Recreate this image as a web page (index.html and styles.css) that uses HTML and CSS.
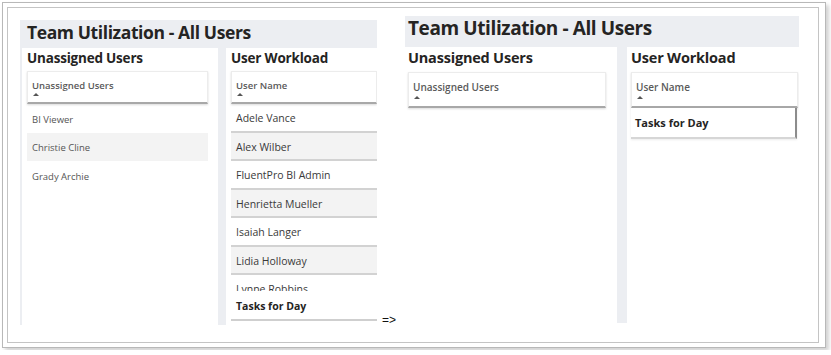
FILE: index.html
```html
<!DOCTYPE html>
<html lang="en">
<head>
  <meta charset="UTF-8">
  <title>Team Utilization - Before and After</title>
  <link rel="stylesheet" href="styles.css">
</head>
<body>
  <div class="frame">
    <div class="sheet">

      <!-- before -->
      <div class="shot shot-before">
        <div class="shot-title">Team Utilization - All Users</div>
        <div class="shot-body">
          <div class="panel panel-left">
            <div class="panel-title">Unassigned Users</div>
            <div class="table-head">
              <span>Unassigned Users</span>
              <i class="caret"></i>
            </div>
            <div class="row">BI Viewer</div>
            <div class="row row-alt">Christie Cline</div>
            <div class="row">Grady Archie</div>
          </div>
          <div class="panel panel-right">
            <div class="panel-title">User Workload</div>
            <div class="table-head">
              <span>User Name</span>
              <i class="caret"></i>
            </div>
            <div class="rows">
              <div class="row row-line">Adele Vance</div>
              <div class="row row-line row-alt">Alex Wilber</div>
              <div class="row row-line">FluentPro BI Admin</div>
              <div class="row row-line row-alt">Henrietta Mueller</div>
              <div class="row row-line">Isaiah Langer</div>
              <div class="row row-line row-alt">Lidia Holloway</div>
              <div class="row row-line">Lynne Robbins</div>
            </div>
            <div class="tasks">Tasks for Day</div>
          </div>
        </div>
      </div>

      <div class="arrow">=&gt;</div>

      <!-- after -->
      <div class="shot shot-after">
        <div class="shot-title">Team Utilization - All Users</div>
        <div class="shot-body">
          <div class="panel panel-left">
            <div class="panel-title">Unassigned Users</div>
            <div class="table-head">
              <span>Unassigned Users</span>
              <i class="caret"></i>
            </div>
          </div>
          <div class="panel panel-right">
            <div class="panel-title">User Workload</div>
            <div class="table-head">
              <span>User Name</span>
              <i class="caret"></i>
            </div>
            <div class="tasks">Tasks for Day</div>
          </div>
        </div>
      </div>

    </div>
  </div>
</body>
</html>
```

FILE: styles.css
```css
* {
  box-sizing: border-box;
}

body {
  margin: 0;
  background: #ffffff;
  font-family: "Open Sans", "Noto Sans", sans-serif;
  color: #252423;
}

.frame {
  width: 824px;
  height: 346px;
  margin: 2px;
  border: 1px solid #b8b8b8;
  background: #fff;
  box-shadow: 3px 3px 4px rgba(0, 0, 0, 0.18);
}

.sheet {
  width: 812px;
  height: 336px;
  margin: 4px;
  border: 1px solid #c4c4c4;
  padding: 8px 0 0 12px;
  display: flex;
  align-items: flex-start;
}

.shot {
  display: flex;
  flex-direction: column;
  background: #eceef2;
}

.shot-title {
  font-weight: 700;
  letter-spacing: -0.4px;
  white-space: nowrap;
}

.shot-body {
  flex: 1;
  display: flex;
}

.panel {
  background: #fff;
  overflow: hidden;
  display: flex;
  flex-direction: column;
}

.panel-title {
  font-weight: 700;
  letter-spacing: -0.2px;
  white-space: nowrap;
}

.table-head {
  background: #fff;
  border: 1px solid #ececec;
  border-bottom: 2px solid #a8a8a8;
  box-shadow: 0 1px 2px rgba(0, 0, 0, 0.15);
  color: #5a5a5a;
  font-weight: 600;
  white-space: nowrap;
  display: flex;
  flex-direction: column;
  align-items: flex-start;
}

.caret {
  width: 0;
  height: 0;
  border-left: 3px solid transparent;
  border-right: 3px solid transparent;
  border-bottom: 3px solid #555;
}

.row {
  height: 28.5px;
  padding-top: 2px;
  display: flex;
  align-items: center;
  white-space: nowrap;
}

.row-alt {
  background: #f3f3f3;
}

.row-line {
  border-bottom: 2px solid #d2d2d2;
}

.tasks {
  font-weight: 700;
  white-space: nowrap;
  display: flex;
  align-items: center;
  background: #fff;
}

.arrow {
  width: 23px;
  margin: 296px 0 0 5px;
  font-family: "Liberation Sans", sans-serif;
  font-size: 12px;
  line-height: 16px;
  color: #111;
}

/* before */

.shot-before {
  width: 357px;
  height: 305px;
  margin-top: 4px;
}

.shot-before .shot-title {
  height: 28px;
  padding-left: 7px;
  font-size: 17.5px;
  line-height: 24px;
}

.shot-before .shot-body {
  padding-left: 2px;
  gap: 8px;
}

.shot-before .panel-left {
  width: 196px;
  padding: 0 10px 0 5px;
}

.shot-before .panel-right {
  flex: 1;
  padding-left: 5px;
}

.shot-before .panel-title {
  font-size: 13.5px;
  line-height: 20px;
  margin-bottom: 3px;
}

.shot-before .table-head {
  height: 33px;
  padding: 7px 0 0 4px;
  font-size: 9.5px;
  line-height: 13px;
}

.shot-before .caret {
  margin: 1px 0 0 1px;
}

.shot-before .panel-left .row {
  padding-left: 5px;
  font-size: 9.5px;
  color: #555;
}

.shot-before .rows {
  height: 187px;
  overflow: hidden;
}

.shot-before .panel-right .row {
  padding-left: 5px;
  font-size: 10.5px;
  color: #3a3a3a;
}

.shot-before .tasks {
  height: 30px;
  padding: 1px 0 0 5px;
  font-size: 10.5px;
  border-bottom: 2px solid #cfcfcf;
}

/* after */

.shot-after {
  width: 394px;
  height: 307px;
}

.shot-after .shot-title {
  height: 31px;
  padding-left: 3px;
  font-size: 19px;
  line-height: 24px;
}

.shot-after .shot-body {
  gap: 10px;
}

.shot-after .panel-left {
  width: 212px;
  padding: 0 11px 0 3px;
}

.shot-after .panel-right {
  flex: 1;
  padding: 0 1px 0 4px;
}

.shot-after .panel-title {
  font-size: 14.5px;
  line-height: 22px;
  margin-bottom: 3px;
}

.shot-after .table-head {
  height: 36px;
  padding: 8px 0 0 4px;
  font-size: 10px;
  line-height: 13px;
}

.shot-after .caret {
  margin: 2px 0 0 1px;
}

.shot-after .tasks {
  height: 31px;
  margin-right: 1px;
  padding-left: 4px;
  font-size: 11px;
  border-right: 2px solid #8c8c8c;
  border-bottom: 2px solid #d6d6d6;
  box-shadow: 0 1px 2px rgba(0, 0, 0, 0.08);
}
```
